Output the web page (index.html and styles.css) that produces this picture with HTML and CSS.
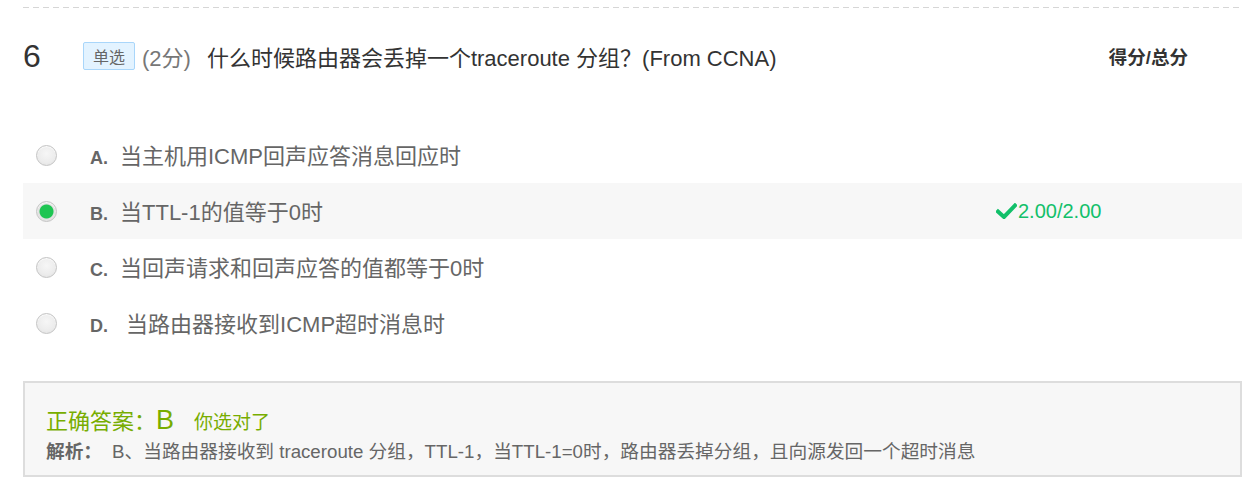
FILE: index.html
```html
<!DOCTYPE html>
<html lang="zh-CN">
<head>
<meta charset="utf-8">
<title>Question 6</title>
<link rel="stylesheet" href="styles.css">
</head>
<body>
<div class="page">
  <div class="sep"></div>
  <div class="q-head">
    <div class="q-num">6</div>
    <span class="q-tag">单选</span>
    <span class="q-score">(2分)</span>
    <span class="q-title">什么时候路由器会丢掉一个traceroute 分组？(From CCNA)</span>
    <span class="q-total">得分/总分</span>
  </div>
  <ul class="options">
    <li class="opt">
      <span class="radio"></span>
      <span class="opt-body">
        <span class="opt-label">A.</span>
        <span class="opt-text">当主机用ICMP回声应答消息回应时</span>
      </span>
    </li>
    <li class="opt opt-selected">
      <span class="radio radio-on"></span>
      <span class="opt-body">
        <span class="opt-label">B.</span>
        <span class="opt-text">当TTL-1的值等于0时</span>
      </span>
      <span class="opt-result">
        <svg class="check" width="21" height="16" viewBox="0 0 21 16"><path d="M2 8.5 L8 14 L19 2.5" fill="none" stroke="#12c06a" stroke-width="4" stroke-linecap="square"/></svg>2.00/2.00
      </span>
    </li>
    <li class="opt">
      <span class="radio"></span>
      <span class="opt-body">
        <span class="opt-label">C.</span>
        <span class="opt-text">当回声请求和回声应答的值都等于0时</span>
      </span>
    </li>
    <li class="opt">
      <span class="radio"></span>
      <span class="opt-body">
        <span class="opt-label">D.</span>
        <span class="opt-text">&nbsp;当路由器接收到ICMP超时消息时</span>
      </span>
    </li>
  </ul>
  <div class="answer">
    <div class="answer-line">
      <span class="answer-key">正确答案：</span><span class="answer-letter">B</span><span class="answer-note">你选对了</span>
    </div>
    <div class="analysis">
      <span class="analysis-key">解析：</span><span class="analysis-text">B、当路由器接收到 traceroute 分组，TTL-1，当TTL-1=0时，路由器丢掉分组，且向源发回一个超时消息</span>
    </div>
  </div>
</div>
</body>
</html>
```

FILE: styles.css
```css
* { box-sizing: border-box; }
html, body { margin: 0; padding: 0; background: #fff; }
body {
  font-family: "Liberation Sans", "Noto Sans CJK SC", sans-serif;
  color: #333;
}
.page {
  padding: 0 13px 0 23px;
}
.sep {
  margin-top: 7px;
  height: 1px;
  background-image: repeating-linear-gradient(to right, #d6d6d6 0 6px, transparent 6px 10px);
}
.q-head {
  display: flex;
  align-items: center;
  height: 40px;
  margin-top: 28px;
}
.q-num {
  width: 60px;
  font-size: 32px;
  color: #333;
  line-height: 40px;
}
.q-tag {
  display: inline-flex;
  align-items: center;
  justify-content: center;
  height: 28px;
  padding: 0 9px;
  font-size: 16px;
  color: #666;
  background: #e3f3ff;
  border: 1px solid #a9d6fa;
  border-radius: 2px;
}
.q-score {
  margin-left: 7px;
  font-size: 22px;
  color: #777;
}
.q-title {
  margin-left: 16px;
  flex: 1;
  font-size: 22px;
  color: #333;
}
.q-total {
  margin-right: 54px;
  font-size: 18.5px;
  font-weight: bold;
  color: #333;
}
.options {
  list-style: none;
  margin: 51px 0 0;
  padding: 0;
}
.opt {
  display: flex;
  align-items: center;
  height: 56px;
  padding-left: 13px;
}
.opt-selected {
  background: #f7f7f7;
}
.radio {
  flex: 0 0 21px;
  width: 21px;
  height: 21px;
  border-radius: 50%;
  border: 1px solid #c4c4c4;
  background: radial-gradient(circle at 50% 40%, #f6f6f6 0, #ececec 60%, #dedede 100%);
  box-shadow: inset 0 1px 1px rgba(255,255,255,0.8);
}
.radio-on {
  background: radial-gradient(circle, #1ec552 0, #1ec552 6.5px, #e2e2e2 7.5px, #ebebeb 100%);
}
.opt-body {
  display: flex;
  align-items: baseline;
  flex: 0 0 906px;
  margin-left: 33px;
  margin-bottom: 3px;
}
.opt-label {
  width: 30px;
  font-size: 18px;
  font-weight: bold;
  color: #666;
}
.opt-text {
  font-size: 22px;
  color: #666;
}
.opt-result {
  display: flex;
  align-items: center;
  font-size: 20px;
  color: #12c06a;
}
.check {
  margin-right: 1px;
}
.answer {
  margin-top: 30px;
  border: 2px solid #ddd;
  background: #f7f7f7;
  padding: 22px 21px 11px;
}
.answer-line {
  display: flex;
  align-items: baseline;
  height: 30px;
  line-height: 30px;
  color: #78ad00;
}
.answer-key {
  font-size: 22px;
}
.answer-letter {
  font-size: 27px;
}
.answer-note {
  font-size: 19px;
  margin-left: 20px;
}
.analysis {
  margin-top: 5px;
  line-height: 24px;
  font-size: 18.7px;
  color: #666;
}
.analysis-key {
  font-weight: bold;
  margin-right: 10px;
}
```
